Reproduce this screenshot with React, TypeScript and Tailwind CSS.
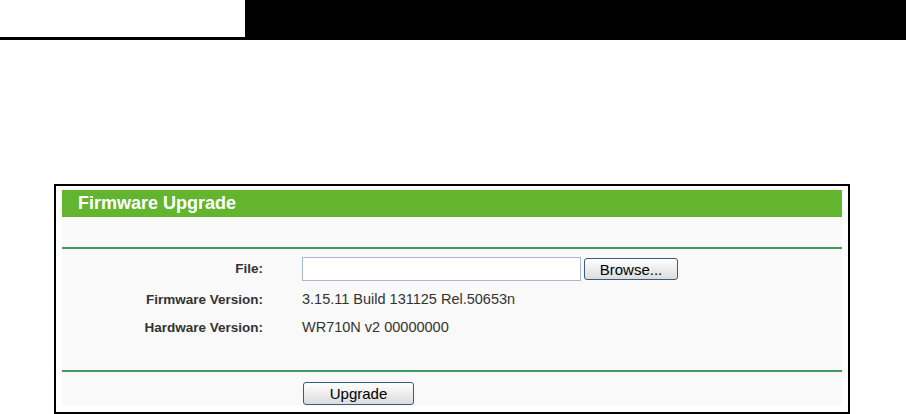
const labelCls = "text-right font-bold text-[13.5px] text-[#333]";
const valueCls = "text-[14.5px] text-[#333]";

const btnCls =
  "h-[22px] rounded-[3px] border border-[#3d5a80] bg-gradient-to-b from-[#ffffff] to-[#dcdcdc] text-[15px] text-black leading-none";

export default function App() {
  return (
    <div className="w-[906px] h-[414px] bg-white overflow-hidden font-['Liberation_Sans',Arial,sans-serif]">
      {/* page header strip */}
      <div className="flex h-[40px]">
        <div className="w-[245px] border-b-[3px] border-black" />
        <div className="flex-1 bg-black" />
      </div>

      <div className="ml-[54px] mt-[144px] w-[796px] h-[230px] border-2 border-black bg-white px-[6px] pt-[4px]">
        <div className="h-[27px] bg-[#63b52f] pl-[16px] flex items-center text-white font-bold text-[18px]">
          Firmware Upgrade
        </div>
        <div className="bg-[#f9f9f9] h-[189px]">
          <div className="h-[30px]" />
          <div className="h-[2px] bg-[#3f9a63]" />
          <div className="grid grid-cols-[201px_1fr] gap-x-[39px] pt-[8px]">
            <div className={`${labelCls} h-[24px] flex items-center justify-end`}>File:</div>
            <div className="flex items-center gap-[3px]">
              <input
                type="text"
                className="w-[279px] h-[24px] border border-[#a7bacd] bg-white outline-none"
              />
              <button type="button" className={`${btnCls} w-[94px]`}>
                Browse...
              </button>
            </div>
            <div className={`${labelCls} h-[38px] flex items-center justify-end`}>Firmware Version:</div>
            <div className={`${valueCls} h-[38px] flex items-center`}>3.15.11 Build 131125 Rel.50653n</div>
            <div className={`${labelCls} h-[18px] flex items-center justify-end`}>Hardware Version:</div>
            <div className={`${valueCls} h-[18px] flex items-center`}>WR710N v2 00000000</div>
          </div>
          <div className="h-[33px]" />
          <div className="h-[2px] bg-[#3f9a63]" />
          <div className="grid grid-cols-[201px_1fr] gap-x-[40px] pt-[10px]">
            <div />
            <button type="button" className={`${btnCls} w-[111px] h-[23px]`}>
              Upgrade
            </button>
          </div>
        </div>
      </div>
    </div>
  );
}
